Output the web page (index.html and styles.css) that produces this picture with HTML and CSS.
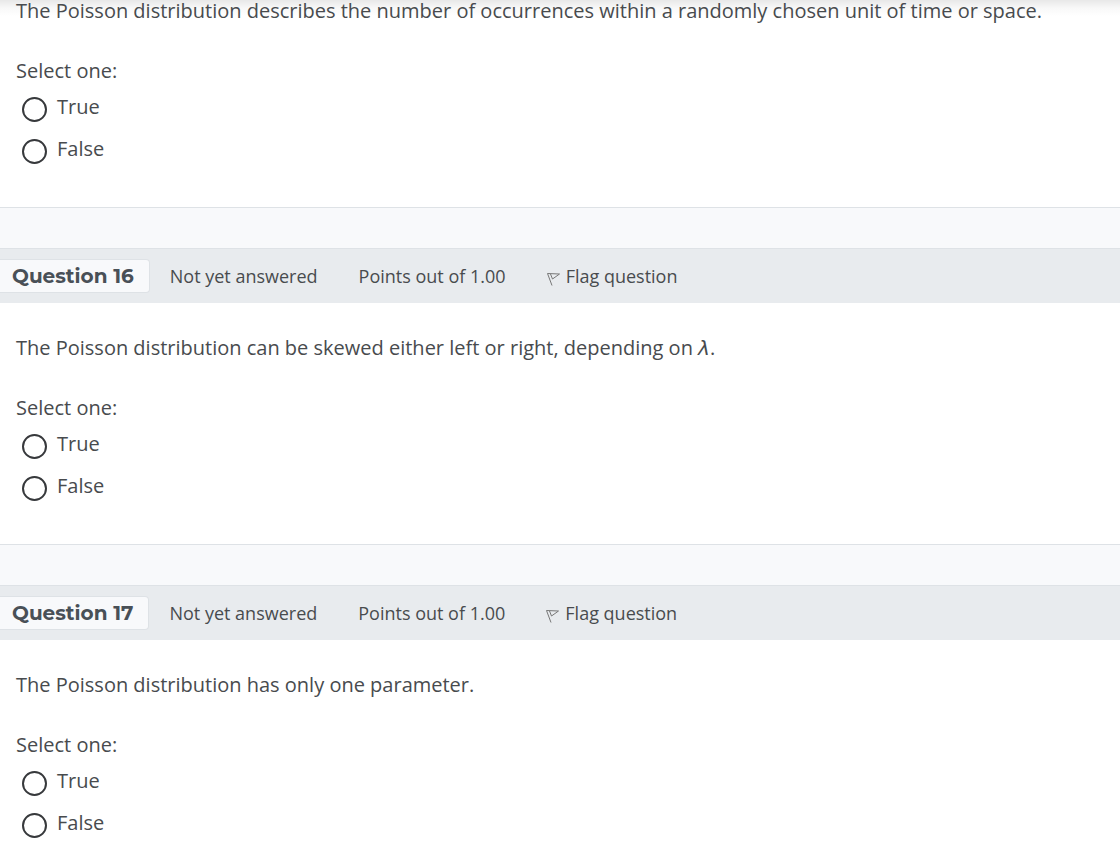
FILE: index.html
```html
<!DOCTYPE html>
<html lang="en">
<head>
<meta charset="utf-8">
<title>Quiz</title>
<link rel="stylesheet" href="styles.css">
</head>
<body>
<main class="quiz">
  <section class="question">
    <div class="content">
      <p class="text">The Poisson distribution describes the number of occurrences within a randomly chosen unit of time or space.</p>
      <fieldset class="answers">
        <legend class="prompt">Select one:</legend>
        <label class="option"><input class="radio" type="radio" name="q15"><span>True</span></label>
        <label class="option"><input class="radio" type="radio" name="q15"><span>False</span></label>
      </fieldset>
    </div>
  </section>
  <section class="question">
    <header class="info">
      <h3 class="number">Question 16</h3>
      <span class="state">Not yet answered</span>
      <span class="grade">Points out of 1.00</span>
      <a class="flag" href="#"><svg class="flag-icon" viewBox="0 0 13 20" aria-hidden="true"><path d="M.5 7.5L5 19.5M.5 7.5L12.5 8L5.5 13M3.5 8L5.5 13"/></svg>Flag question</a>
    </header>
    <div class="content">
      <p class="text">The Poisson distribution can be skewed either left or right, depending on <i class="symbol">λ</i>.</p>
      <fieldset class="answers">
        <legend class="prompt">Select one:</legend>
        <label class="option"><input class="radio" type="radio" name="q16"><span>True</span></label>
        <label class="option"><input class="radio" type="radio" name="q16"><span>False</span></label>
      </fieldset>
    </div>
  </section>
  <section class="question">
    <header class="info">
      <h3 class="number">Question 17</h3>
      <span class="state">Not yet answered</span>
      <span class="grade">Points out of 1.00</span>
      <a class="flag" href="#"><svg class="flag-icon" viewBox="0 0 13 20" aria-hidden="true"><path d="M.5 7.5L5 19.5M.5 7.5L12.5 8L5.5 13M3.5 8L5.5 13"/></svg>Flag question</a>
    </header>
    <div class="content">
      <p class="text">The Poisson distribution has only one parameter.</p>
      <fieldset class="answers">
        <legend class="prompt">Select one:</legend>
        <label class="option"><input class="radio" type="radio" name="q17"><span>True</span></label>
        <label class="option"><input class="radio" type="radio" name="q17"><span>False</span></label>
      </fieldset>
    </div>
  </section>
</main>
</body>
</html>
```
FILE: styles.css
```css
* { box-sizing: border-box; }
body {
  margin: 0;
  background: #f8f9fb;
  color: #484b4e;
  font: 20px/30px "Open Sans", sans-serif;
}
.quiz {
  display: flex;
  flex-direction: column;
  gap: 40px;
  height: 100vh;
  overflow: hidden;
}
.question {
  flex: none;
  background: #fff;
  border-bottom: 1px solid #dee2e6;
}
.question:first-child {
  background: linear-gradient(#e8e8e8, #f8f8f8 8px, #fff 16px);
}
.question:first-child .content { padding-top: 0; }
.question:first-child .text {
  margin-bottom: 34px;
  line-height: 22px;
}
.info {
  display: flex;
  align-items: center;
  height: 55px;
  background: #e8ebee;
  border-top: 1px solid #dee2e6;
  font-size: 18px;
}
.number {
  margin: 0 20px 0 0;
  padding: 0 15px 0 12px;
  border: 1px solid #dee2e6;
  border-left: 0;
  border-radius: 0 4px 4px 0;
  background: #f8f9fb;
  color: #495057;
  font: 700 20px/32px Montserrat, "Open Sans", sans-serif;
}
.state, .grade { margin-right: 41px; }
.flag {
  display: flex;
  align-items: center;
  gap: 6px;
  color: inherit;
  text-decoration: none;
}
.flag-icon {
  width: 13px;
  height: 20px;
  fill: none;
  stroke: #777;
}
.symbol {
  font-family: "DejaVu Sans", sans-serif;
  line-height: 1;
}
.content { padding: 30px 16px 37px; }
.text { margin: 0 0 30px; }
.answers {
  margin: 0;
  padding: 0;
  border: 0;
}
.prompt { padding: 0; }
.option {
  display: flex;
  gap: 10px;
  padding: 6px;
  height: 42px;
}
.radio {
  appearance: none;
  flex: none;
  width: 25px;
  height: 25px;
  margin: 5px 0 0;
  border: 2px solid #37393c;
  border-radius: 50%;
  background: #fff;
}
```
